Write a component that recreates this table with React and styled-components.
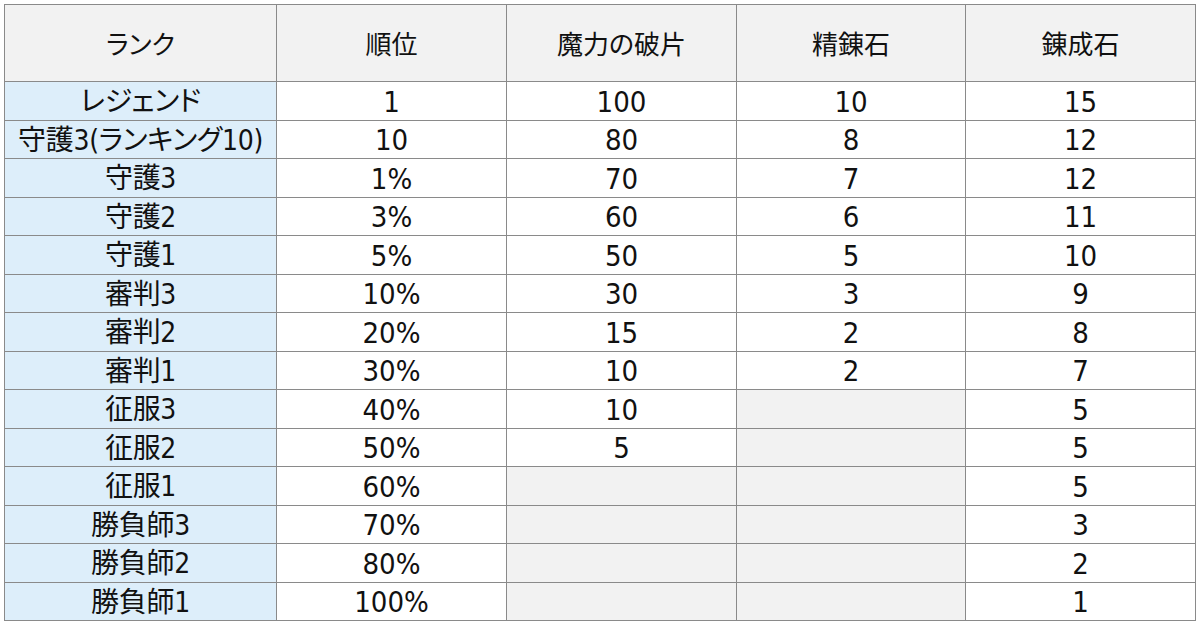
import React from "react";
import styled, { createGlobalStyle } from "styled-components";

const rows = [
  ["レジェンド", "1", "100", "10", "15"],
  ["守護3(ランキング10)", "10", "80", "8", "12"],
  ["守護3", "1%", "70", "7", "12"],
  ["守護2", "3%", "60", "6", "11"],
  ["守護1", "5%", "50", "5", "10"],
  ["審判3", "10%", "30", "3", "9"],
  ["審判2", "20%", "15", "2", "8"],
  ["審判1", "30%", "10", "2", "7"],
  ["征服3", "40%", "10", null, "5"],
  ["征服2", "50%", "5", null, "5"],
  ["征服1", "60%", null, null, "5"],
  ["勝負師3", "70%", null, null, "3"],
  ["勝負師2", "80%", null, null, "2"],
  ["勝負師1", "100%", null, null, "1"],
];

const headers = ["ランク", "順位", "魔力の破片", "精錬石", "錬成石"];
const widths = [272, 230, 230, 229, 230];

export default function App() {
  return (
    <>
      <GlobalStyle />
      <Page>
        <Table>
          <colgroup>
            {widths.map((w, i) => (
              <col key={i} style={{ width: w }} />
            ))}
          </colgroup>
          <thead>
            <tr>
              {headers.map((h) => (
                <HeadCell key={h}>{h}</HeadCell>
              ))}
            </tr>
          </thead>
          <tbody>
            {rows.map((r) => (
              <Row key={r[0]}>
                {r.map((v, i) =>
                  i === 0 ? (
                    <RankCell key={i}>{v}</RankCell>
                  ) : (
                    <Cell key={i} $empty={v === null}>
                      {v}
                    </Cell>
                  )
                )}
              </Row>
            ))}
          </tbody>
        </Table>
      </Page>
    </>
  );
}

const GlobalStyle = createGlobalStyle`
  body {
    margin: 0;
    background: #ffffff;
    font-family: "DejaVu Sans", "Noto Sans CJK JP", sans-serif;
    font-stretch: condensed;
    font-feature-settings: "palt";
    color: #111;
  }
`;

const Page = styled.div`
  padding: 4px 0 0 4px;
  width: 1200px;
  height: 627px;
  box-sizing: border-box;
`;

const Table = styled.table`
  border-collapse: collapse;
  table-layout: fixed;
  width: 1191px;
  border: 1px solid #555;
`;

const HeadCell = styled.th`
  box-sizing: border-box;
  height: 77px;
  padding: 0 0 2px;
  background: #f2f2f2;
  border: 1px solid #8a8a8a;
  font-weight: normal;
  font-size: 26px;
  text-align: center;
  vertical-align: middle;
`;

const Row = styled.tr`
  height: 38.5px;
`;

const Cell = styled.td`
  padding: 3px 0 0;
  height: 38.5px;
  box-sizing: border-box;
  border: 1px solid #8a8a8a;
  background: ${(p) => (p.$empty ? "#f2f2f2" : "#ffffff")};
  font-size: 29px;
  line-height: 1;
  text-align: center;
  vertical-align: middle;
`;

const RankCell = styled(Cell)`
  background: #ddeefa;
  font-size: 28px;
  letter-spacing: -0.3px;
`;
